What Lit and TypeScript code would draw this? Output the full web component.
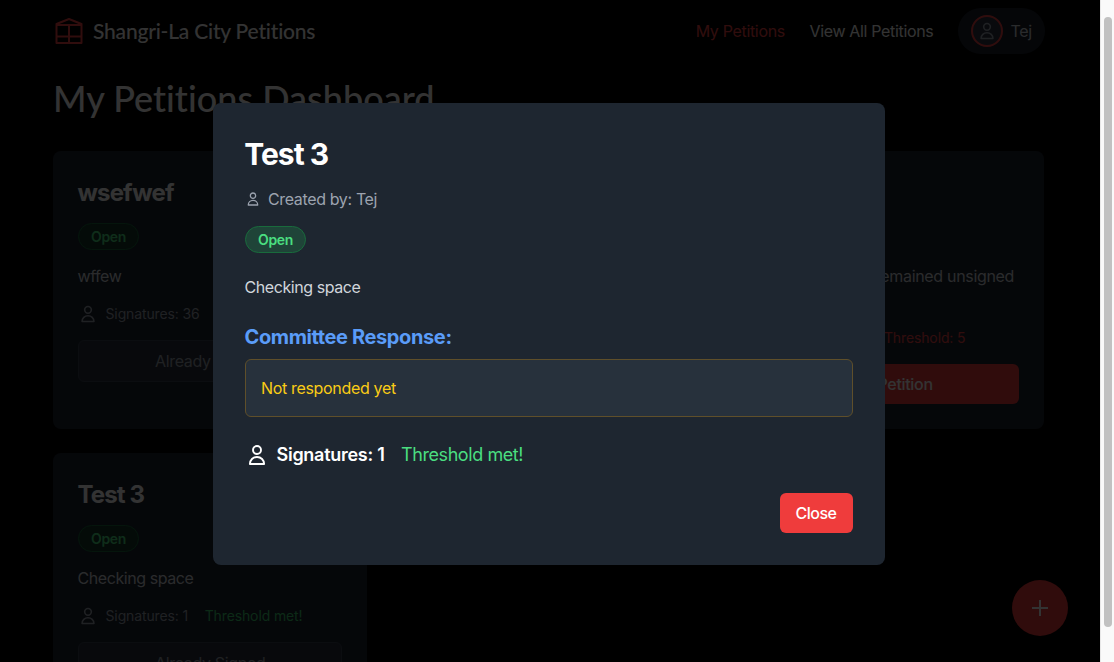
import { LitElement, html, css, svg } from "lit";
import { customElement } from "lit/decorators.js";

const userIcon = (size: number) => html`<svg width=${size} height=${size} viewBox="0 0 24 24" fill="none" stroke="currentColor" stroke-width="1.9">
  ${svg`<circle cx="12" cy="7" r="4"/><path d="M4.9 21c0-4 3.1-7 7.1-7s7.1 3 7.1 7z" stroke-linejoin="round"/>`}</svg>`;

@customElement("app-root")
export class AppRoot extends LitElement {
  static styles = css`
    :host { display: block; position: relative; width: 1114px; height: 662px; overflow: hidden; background: #000; color: #fff; font: 16px/24px Inter, sans-serif; letter-spacing: -.33px; }
    * { box-sizing: border-box; }
    svg { display: block; flex: none; }
    .page { width: 1100px; height: 662px; overflow: hidden; padding: 8px 56px 0 53px; }
    .bar { display: flex; align-items: center; height: 46px; margin-right: -1px; }
    .logo { color: #ef4444; margin-left: 1px; }
    .brand { font: 500 21px/28px Lato, sans-serif; letter-spacing: -.2px; font-variant-ligatures: none; margin-left: 9px; flex: 1; white-space: nowrap; }
    .link { white-space: nowrap; margin-right: 24.5px; }
    .active { color: #ef4444; }
    .pill { display: flex; align-items: center; gap: 7.5px; width: 87px; height: 46px; padding-left: 13px; border-radius: 23px; background: #1a202c; color: #d1d5db; }
    .avatar { display: grid; place-items: center; width: 32px; height: 32px; border: 2px solid #ef4444; border-radius: 50%; background: #2f3542; color: #9ca3af; }
    h1 { font: 500 36px/40px Lato, sans-serif; letter-spacing: .03px; font-variant-ligatures: none; margin: 24px 0 33px; }
    .grid { display: grid; grid-template-columns: repeat(3, 1fr); gap: 24px; }
    .card { height: 278px; padding: 25px; border-radius: 8px; background: #1c2330; white-space: nowrap; }
    .card h2 { font: 700 24px/32px Inter, sans-serif; letter-spacing: -.85px; margin: 1px 0 14px -.5px; }
    .badge { display: block; width: 61px; height: 27px; border: 1px solid #196b3c; border-radius: 14px; background: #1f4438; color: #4ade80; font-size: 14px; font-weight: 600; line-height: 26px; text-align: center; }
    .card .badge { border-color: #196b3c; background: #14382a; color: #4ade80; }
    .desc { margin-top: 14px; margin-left: -.5px; color: #d1d5db; letter-spacing: -.43px; }
    .sig { display: flex; align-items: center; height: 20px; margin-top: 16px; font-size: 14px; letter-spacing: -.12px; color: #9ca3af; }
    .sig span { margin-left: 7.5px; }
    .sig .met { margin-left: 16.5px; color: #3ccf70; }
    .signed { height: 42px; margin-top: 16px; border: 1px solid #374151; border-radius: 6px; background: #2c313d; color: #9ca3af; line-height: 40px; text-align: center; }
    .late { text-align: right; margin: 88px 5px 0 0; color: #d1d5db; }
    .limit { text-align: right; margin: 38px 53.5px 0 0; font-size: 14px; letter-spacing: -.12px; color: #ef4444; }
    .sign { height: 40px; margin-top: 14px; border-radius: 6px; background: #ef3c3c; font-weight: 500; line-height: 40px; text-align: center; }
    .fab { position: absolute; left: 1012px; top: 580px; width: 56px; height: 56px; border-radius: 50%; background: #ef3c3c; display: grid; place-items: center; }
    .shade { position: absolute; top: 0; left: 0; width: 1100px; height: 662px; background: rgba(0, 0, 0, .8); }
    .modal { position: absolute; left: 213px; top: 103px; width: 672px; height: 462px; padding: 32px; border-radius: 8px; background: #1e2630; }
    .modal h2 { font: 700 30px/36px Inter, sans-serif; letter-spacing: -1px; margin: 1px 0 15px -.7px; }
    .by { display: flex; align-items: center; gap: 7px; height: 24px; margin-bottom: 15px; color: #9ca3af; letter-spacing: -.36px; }
    .modal .desc { margin-top: 22px; color: #d1d5db; }
    h3 { font: 700 20px/28px Inter, sans-serif; letter-spacing: -.38px; margin: 24px 0 8px -.5px; color: #5a9cf8; }
    .response { height: 58px; border: 1px solid #5f4f2a; border-radius: 6px; background: #27313c; padding: 16px 15px; color: #facc15; }
    .total { display: flex; align-items: center; height: 28px; margin-top: 24px; font-size: 18px; }
    .total b { margin: 0 16.5px 0 7.5px; font-weight: 600; letter-spacing: -.27px; }
    .total span { color: #4ade80; letter-spacing: -.43px; }
    .actions { display: flex; justify-content: flex-end; margin-top: 24px; }
    button { width: 73px; height: 40px; padding: 0 1px 0 0; border: 0; border-radius: 6px; background: #ef3c3c; color: #fff; font: 500 16px/24px Inter, sans-serif; letter-spacing: -.5px; }
    .track { position: absolute; right: 0; top: 0; width: 14px; height: 662px; background: #fafafa; border-left: 1px solid #e8e8e8; padding: 17px 2px 0 3px; }
    .thumb { height: 610px; width: 8px; border-radius: 4px; background: #c1c1c1; }
  `;

  render() {
    return html`
      <div class="page">
        <div class="bar">
          <svg class="logo" width="30" height="30" viewBox="0 0 30 30" fill="none" stroke="currentColor" stroke-width="2" stroke-linejoin="round"><path d="M2.5 8v19h25V8L15 3zM2.5 9h25M2.5 20.5h25M15 9V27"/></svg>
          <span class="brand">Shangri-La City Petitions</span>
          <span class="link active">My Petitions</span>
          <span class="link">View All Petitions</span>
          <span class="pill"><span class="avatar">${userIcon(20)}</span><span>Tej</span></span>
        </div>
        <h1>My Petitions Dashboard</h1>
        <div class="grid">
          <div class="card">
            <h2>wsefwef</h2><span class="badge">Open</span>
            <div class="desc">wffew</div>
            <div class="sig">${userIcon(20)}<span>Signatures: 36</span></div>
            <div class="signed">Already Signed</div>
          </div>
          <div class="card"></div>
          <div class="card">
            <div class="late">remained unsigned</div>
            <div class="limit">Threshold: 5</div>
            <div class="sign">Sign Petition</div>
          </div>
          <div class="card">
            <h2>Test 3</h2><span class="badge">Open</span>
            <div class="desc">Checking space</div>
            <div class="sig">${userIcon(20)}<span>Signatures: 1</span><span class="met">Threshold met!</span></div>
            <div class="signed">Already Signed</div>
          </div>
        </div>
      </div>
      <div class="fab"><svg width="24" height="24" viewBox="0 0 24 24" stroke="#fff" stroke-width="2"><path d="M4 12h16M12 4v16"/></svg></div>
      <div class="shade"></div>
      <div class="modal">
        <h2>Test 3</h2>
        <div class="by">${userIcon(16)}<span>Created by: Tej</span></div>
        <span class="badge">Open</span>
        <div class="desc">Checking space</div>
        <h3>Committee Response:</h3>
        <div class="response">Not responded yet</div>
        <div class="total">${userIcon(24)}<b>Signatures: 1</b><span>Threshold met!</span></div>
        <div class="actions"><button>Close</button></div>
      </div>
      <div class="track"><div class="thumb"></div></div>`;
  }
}
